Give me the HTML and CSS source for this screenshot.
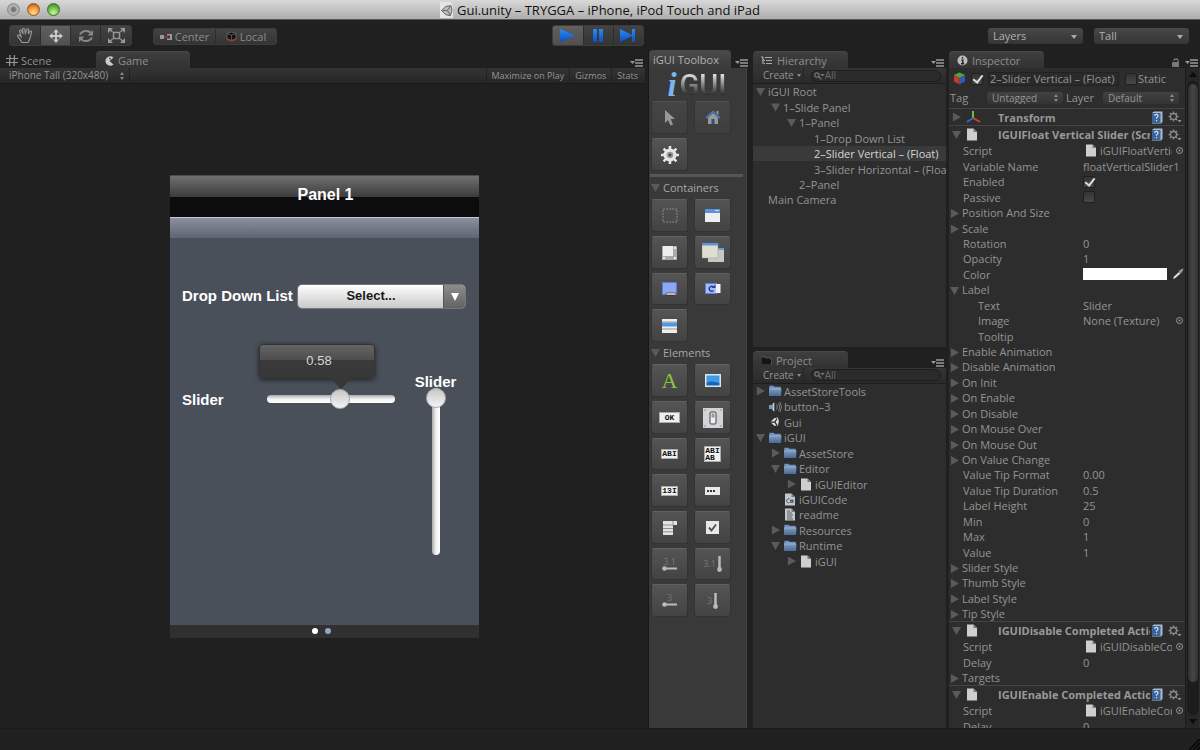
FILE: index.html
```html
<!DOCTYPE html>
<html lang="en">
<head>
<meta charset="utf-8">
<title>Gui.unity – TRYGGA – iPhone, iPod Touch and iPad</title>
<link rel="stylesheet" href="styles.css">
</head>
<body>
<svg class="defs" aria-hidden="true">
  <defs>
    <linearGradient id="blue" x1="0" y1="0" x2="0" y2="1"><stop offset="0" stop-color="#2c8cf4"/><stop offset="1" stop-color="#0b4fc4"/></linearGradient>
    <linearGradient id="fold" x1="0" y1="0" x2="0" y2="1"><stop offset="0" stop-color="#7f9cc0"/><stop offset="1" stop-color="#4d6a92"/></linearGradient>
    <symbol id="menu" viewBox="0 0 14 8"><path d="M0 2h5l-2.500 3z" fill="#999"/><path d="M5 1h8M5 4h8M5 7h8" stroke="#999" stroke-width="1.300"/></symbol>
    <symbol id="folder" viewBox="0 0 14 12"><path d="M1 1.500q0-1 1-1h3.500l1 1H12q1 0 1 1v8.500H1z" fill="#7593b8" stroke="#263345" stroke-width=".6"/><path d="M1 3.500h12.500l-.5 7.500H1z" fill="url(#fold)"/><path d="M1.500 4h11.500" stroke="#a5bbd8" stroke-width=".7"/></symbol>
    <symbol id="page" viewBox="0 0 12 13"><path d="M1 .5h6.500l3.500 3.500v8.500H1z" fill="#cfcfcf"/><path d="M7.500.5v3.500H11z" fill="#777"/></symbol>
    <symbol id="cspage" viewBox="0 0 12 13"><path d="M1 .5h6.500l3.500 3.500v8.500H1z" fill="#c4c8cc"/><path d="M7.500.5v3.500H11z" fill="#777"/><path d="M5.500 6a2 2 0 1 0 0 3.600M7 6.500v3.500M8.700 6.500v3.500M6.200 7.500h3.300M6.200 9h3.300" fill="none" stroke="#34506e" stroke-width=".9"/></symbol>
    <symbol id="textpage" viewBox="0 0 12 13"><path d="M1 .5h6.500l3.500 3.500v8.500H1z" fill="#c4c8cc"/><path d="M7.500.5v3.500H11z" fill="#777"/><path d="M3 3h3M3 5h5M3 7h6M3 9h5M3 11h6" stroke="#59616b" stroke-width="1"/></symbol>
    <symbol id="sound" viewBox="0 0 14 12"><path d="M1 4h2.500l3-3v10l-3-3H1z" fill="#7f9ab8"/><path d="M5.500 2v8" stroke="#ccd" stroke-width="1"/><path d="M8.500 3.500q1.500 2.500 0 5M10.500 2q2.500 4 0 8M12 1q3 5 0 10" fill="none" stroke="#888" stroke-width=".9"/></symbol>
    <symbol id="unity" viewBox="0 0 12 12"><path d="M.5 6 5 1.500 9.500.7l1.200 4.500L9.500 10.500 5 10.500z" fill="#ddd"/><path d="M5.800 6 8.500 1.800M5.800 6H.8M5.800 6l2.700 4.300" stroke="#222" stroke-width="1.500"/></symbol>
    <symbol id="help" viewBox="0 0 12 13"><path d="M1.500 1.500 3 .5h8.500v10.500L10 12.500H1z" fill="#a9bbcf"/><path d="M1 2h8.500v10H1z" fill="#3d639c"/><path d="M3.700 5q0-1.700 1.700-1.700T7 5q0 1-1.500 1.800v1M5.500 9v1.200" fill="none" stroke="#d5dfec" stroke-width="1.200"/></symbol>
    <symbol id="cog" viewBox="0 0 14 12"><circle cx="5.500" cy="5.500" r="3" fill="none" stroke="#8a8a8a" stroke-width="1.300"/><path d="M5.500.5v2M5.500 8.500v2M.5 5.500h2M8.500 5.500h2M2 2l1.400 1.400M7.600 7.600 9 9M2 9l1.400-1.400M7.600 3.400 9 2" stroke="#8a8a8a" stroke-width="1.500"/><path d="M9.500 9h4l-2 2.300z" fill="#999"/></symbol>
    <symbol id="target" viewBox="0 0 9 9"><circle cx="4.500" cy="4.500" r="3" fill="none" stroke="#999"/><circle cx="4.500" cy="4.500" r="1" fill="#999"/></symbol>
    <symbol id="search" viewBox="0 0 11 8"><circle cx="3" cy="3" r="2.200" fill="none" stroke="#777" stroke-width="1.200"/><path d="m4.800 4.800 2.400 2.600" stroke="#777" stroke-width="1.300"/><path d="M6.500 2h4l-2 2.500z" fill="#777"/></symbol>
  </defs>
</svg>

<header class="titlebar">
  <div class="lights"><button class="light gray" aria-label="Close"></button><button class="light amber" aria-label="Minimize"></button><button class="light green" aria-label="Zoom"></button></div>
  <h1 class="title"><svg width="13" height="16" viewBox="0 0 13 16"><path d="M0 0h10l3 3v13H0z" fill="#e4e4e4"/><path d="M1.500 8.500 6 4.300l5-.6 1 5-1.600 5L6 12.800z M7.500 8.500l2.500-4M7.500 8.500h-5M7.500 8.500l2.700 4.500" fill="#bbb" stroke="#666" stroke-width="1"/></svg>Gui.unity – TRYGGA – iPhone, iPod Touch and iPad</h1>
</header>

<nav class="toolbar">
  <div class="group tools">
    <button aria-label="Hand"><svg width="18" height="17" viewBox="0 0 18 17"><path d="M6 15.500C4 12 1.500 10 1.500 8.500q1-1.500 3.500 1L3.500 4q.2-1.800 1.800-.7L7 7 6.700 2q.8-1.600 2 0L9.300 6.500 11 2.200q1.300-1 1.800.5L12.200 7l2-2.800q1.600-.5 1.400 1-1.100 3-1.700 6.300-.7 2.500-1.900 4z" fill="none" stroke="#999" stroke-width="1.100"/></svg></button>
    <button class="on" aria-label="Move"><svg width="16" height="16" viewBox="0 0 16 16"><path d="M8 2v12M2 8h12" stroke="#c8c8c8" stroke-width="2"/><path d="M8 1 5 4.500h6zM8 15l-3-3.500h6zM1 8l3.500-3v6zM15 8l-3.500-3v6z" fill="#c8c8c8"/></svg></button>
    <button aria-label="Rotate"><svg width="16" height="14" viewBox="0 0 16 14"><path d="M2 5.500Q4 2 8 2t5 2.500M14 8.500Q12 12 8 12t-5-2.500" fill="none" stroke="#888" stroke-width="2"/><path d="M15 1v5.500H9.500zM1 13V7.500h5.500z" fill="#888"/></svg></button>
    <button aria-label="Scale"><svg width="17" height="15" viewBox="0 0 17 15"><rect x="5.500" y="4.500" width="6" height="6" fill="none" stroke="#999" stroke-width="1.500"/><path d="m1.500 1 3 3M15.500 1l-3 3M1.500 14l3-3M15.500 14l-3-3" stroke="#999" stroke-width="1.300"/><path d="M0 0h5L0 5zM17 0h-5l5 5zM0 15h5l-5-5zM17 15h-5l5-5z" fill="#999"/></svg></button>
  </div>
  <div class="group pivots">
    <button><svg width="12" height="8" viewBox="0 0 12 8"><path d="M0 2h4v4H0zM7 1h5v6H7v-1.500h3v-3H7z" fill="#999"/><path d="M4 4h4" stroke="#a33" stroke-width="1.500"/></svg>Center</button>
    <button><svg width="11" height="11" viewBox="0 0 11 11"><path d="M1 2.500 5.500 1 10 2.500v5L5.500 9.500 1 7.500z" fill="#111" stroke="#666" stroke-width=".9"/><path d="M5.500 4v5M1 2.500l4.500 1.700L10 2.500" fill="none" stroke="#666" stroke-width=".8"/><path d="M0 7q5.500 6 11 0" fill="none" stroke="#a33" stroke-width="1.200"/></svg>Local</button>
  </div>
  <div class="group play">
    <button class="on" aria-label="Play"><svg width="15" height="13" viewBox="0 0 15 13"><path d="m0 0 15 6.500L0 13z" fill="url(#blue)"/></svg></button>
    <button aria-label="Pause"><svg width="10" height="13" viewBox="0 0 10 13"><path d="M0 0h4v13H0zM6 0h4v13H6z" fill="url(#blue)"/></svg></button>
    <button aria-label="Step"><svg width="16" height="13" viewBox="0 0 16 13"><path d="m0 0 12 6V0h3v13h-3V7L0 13z" fill="url(#blue)"/></svg></button>
  </div>
  <div class="pickers">
    <span class="pick"><select aria-label="Layers"><option>Layers</option></select></span>
    <span class="pick"><select aria-label="Layout"><option>Tall</option></select></span>
  </div>
</nav>

<main class="workspace">
  <section class="view">
    <div class="tabs">
      <button class="tab quiet"><svg width="12" height="11" viewBox="0 0 12 11"><path d="M4 0 3.500 11M8.500 0 8 11M0 3.500h12M0 7.500h12" stroke="#999" stroke-width="1.200"/></svg>Scene</button>
      <button class="tab game"><svg width="10" height="10" viewBox="0 0 10 10"><path d="M8.500 1.500A4.800 4.800 0 1 0 8.500 8.500L4.500 5z" fill="#ccc"/><circle cx="5" cy="2.600" r=".8" fill="#333"/></svg>Game</button>
      <svg class="menu" width="14" height="8"><use href="#menu"/></svg>
    </div>
    <div class="strip">
      <span class="updown screen"><select aria-label="Aspect"><option>iPhone Tall (320x480)</option></select></span>
      <button class="first">Maximize on Play</button><button>Gizmos</button><button>Stats</button>
    </div>
    <div class="stage">
      <div class="phone">
        <div class="phone-title">Panel 1</div>
        <div class="phone-body">
          <div class="field"><label for="drop">Drop Down List</label><span class="drop"><select id="drop"><option>Select...</option></select></span></div>
          <div class="sliders">
            <label for="hs">Slider</label>
            <div class="hwrap"><output class="tip" for="hs">0.58</output><input id="hs" type="range" min="0" max="1" step="0.01" value="0.58"></div>
            <div class="vwrap"><label for="vs">Slider</label><input id="vs" type="range" min="0" max="1" step="0.01" value="1"></div>
          </div>
        </div>
        <div class="dots"><i></i><i class="dim"></i></div>
      </div>
    </div>
  </section>

  <section class="toolbox">
    <div class="tabs"><button class="tab">iGUI Toolbox</button><svg class="menu" width="14" height="8"><use href="#menu"/></svg></div>
    <div class="kit">
      <div class="logo"><i>i</i><b>GUI</b></div>
      <div class="pads">
        <button class="faint" aria-label="Select"><svg width="12" height="16" viewBox="0 0 12 16"><path d="M1 0v13l3-3 2.500 5.500 2.500-1L6.700 9H11z" fill="#999"/></svg></button>
        <button class="faint" aria-label="Home"><svg width="16" height="15" viewBox="0 0 16 15"><path d="M3 7.500 8 3l5 4.500V14H3z" fill="#999"/><path d="M1 8 8 1.500 15 8" fill="none" stroke="#4d72ab" stroke-width="2"/><path d="M6.500 9h3v5h-3z" fill="#2d4f86"/><path d="M11.500 1h2v4l-2-2z" fill="#999"/></svg></button>
        <button aria-label="Settings"><svg width="20" height="20" viewBox="0 0 20 20"><g stroke="#e6e6e6" stroke-width="2.600"><path d="M10 1v18M1 10h18M3.600 3.600l12.800 12.800M3.600 16.400 16.400 3.600"/></g><circle cx="10" cy="10" r="6.500" fill="#e6e6e6"/><circle cx="10" cy="10" r="3.300" fill="#999"/><circle cx="10" cy="10" r="1.500" fill="#444"/></svg></button>
      </div>
      <hr>
      <h2><i class="arr open"></i>Containers</h2>
      <div class="pads">
        <button aria-label="Container"><svg width="16" height="15" viewBox="0 0 16 15"><rect x="1" y="1" width="14" height="13" fill="none" stroke="#888" stroke-dasharray="2 1"/></svg></button>
        <button aria-label="Window"><svg width="15" height="13" viewBox="0 0 15 13"><path d="M0 0h15v13H0z" fill="#eee"/><path d="M0 0h15v4H0z" fill="#5c91dc"/><path d="M10 1.500h4" stroke="#dde" stroke-width="1"/></svg></button>
        <button aria-label="Scroll view"><svg width="15" height="14" viewBox="0 0 15 14"><path d="M0 0h15v14H0z" fill="#aaa"/><path d="M1 0h10v10H1z" fill="#eee"/><path d="M12 1h2v2h-2zM12 11h2v2h-2zM1 11h2v2H1z" fill="#eee"/></svg></button>
        <button aria-label="Slide panel"><svg width="22" height="20" viewBox="0 0 22 20"><path d="M6 5h16v14H6z" fill="#c9c9c0"/><path d="M6 5h16v2H6z" fill="#6a9be0"/><path d="M0 0h16v15H0z" fill="#ddddd4" stroke="#999" stroke-width=".5"/><path d="M0 0h16v2.500H0z" fill="#5e92da"/></svg></button>
        <button aria-label="Tab panel"><svg width="15" height="14" viewBox="0 0 15 14"><path d="M.5.500h14v12H.5z" fill="#8fa7f0" stroke="#6079d8"/><path d="M4 11h10v2H4z" fill="#fff" stroke="#333" stroke-width=".7"/></svg></button>
        <button aria-label="Switch panel"><svg width="16" height="12" viewBox="0 0 16 12"><path d="M.5.500h11v10H.5z" fill="#a9bdf5" stroke="#617cda"/><path d="M11 1h4.500v9H11z" fill="#f0f0ff"/><path d="M8.500 4A2.500 2.500 0 1 0 8.500 7.500" fill="none" stroke="#23409a" stroke-width="1.500"/><path d="M6.500 5h4V1.500z" fill="#23409a"/></svg></button>
        <button aria-label="List"><svg width="15" height="14" viewBox="0 0 15 14"><path d="M0 0h15v14H0z" fill="#eee"/><path d="M0 3.500h15v4H0z" fill="#4b9be0"/><path d="M0 3h15M0 10h15" stroke="#999"/></svg></button>
      </div>
      <h2 class="later"><i class="arr open"></i>Elements</h2>
      <div class="pads">
        <button class="letter" aria-label="Label">A</button>
        <button aria-label="Image"><svg width="16" height="13" viewBox="0 0 16 13"><path d="M0 0h16v13H0z" fill="#d8e6ee"/><path d="M1.500 1.500h13v7h-13z" fill="#3f9be8"/><path d="M1.500 8.500 6 7.500l8.500 1v3h-13z" fill="#1566b4"/></svg></button>
        <button aria-label="Button"><span class="chip">OK</span></button>
        <button aria-label="Switch"><svg width="20" height="20" viewBox="0 0 20 20"><path d="M0 0h20v20H0z" fill="#d4d4d8"/><rect x="7" y="4" width="6" height="12" rx="1" fill="#eee" stroke="#444"/><path d="M8.500 5.500h3v4h-3z" fill="#999"/><g fill="#777"><circle cx="2" cy="2" r=".7"/><circle cx="18" cy="2" r=".7"/><circle cx="2" cy="18" r=".7"/><circle cx="18" cy="18" r=".7"/></g></svg></button>
        <button aria-label="Text field"><span class="chip tight">ABI</span></button>
        <button aria-label="Text area"><span class="chip tight tall">ABI<br>AB</span></button>
        <button aria-label="Number field"><span class="chip tight">13I</span></button>
        <button aria-label="Password field"><svg width="15" height="8" viewBox="0 0 15 8"><path d="M0 0h15v8H0z" fill="#e8e8e8"/><path d="M2 3h2v2H2zM5 3h2v2H5zM8 3h2v2H8z" fill="#333"/></svg></button>
        <button aria-label="Drop down list"><svg width="14" height="14" viewBox="0 0 14 14"><path d="M0 0h14v4h-4v10H0z" fill="#e3e3e0"/><path d="M0 4h10M0 7.500h10M0 10.800h10M10 0v4" stroke="#888" stroke-width=".9"/></svg></button>
        <button aria-label="Checkbox"><svg width="13" height="13" viewBox="0 0 13 13"><path d="M0 0h13v13H0z" fill="#e8e8e8"/><path d="m3 6.500 2.500 3L10 3.500" fill="none" stroke="#555" stroke-width="2"/></svg></button>
        <button class="num" aria-label="Float slider horizontal"><span>3.1</span><svg width="16" height="5" viewBox="0 0 16 5"><path d="M2 2.500h13" stroke="#bbb" stroke-width="2"/><circle cx="2.500" cy="2.500" r="2.300" fill="#bbb"/></svg></button>
        <button class="num v" aria-label="Float slider vertical"><span>3.1</span><svg width="5" height="16" viewBox="0 0 5 16"><path d="M2.500 0v13" stroke="#bbb" stroke-width="2.500"/><circle cx="2.500" cy="13.500" r="2.400" fill="#bbb"/></svg></button>
        <button class="num" aria-label="Integer slider horizontal"><span>3</span><svg width="16" height="5" viewBox="0 0 16 5"><path d="M2 2.500h13" stroke="#bbb" stroke-width="2"/><circle cx="2.500" cy="2.500" r="2.300" fill="#bbb"/></svg></button>
        <button class="num v" aria-label="Integer slider vertical"><span>3</span><svg width="5" height="16" viewBox="0 0 5 16"><path d="M2.500 0v13" stroke="#bbb" stroke-width="2.500"/><circle cx="2.500" cy="13.500" r="2.400" fill="#bbb"/></svg></button>
      </div>
    </div>
  </section>

  <div class="stack">
    <section class="panel">
      <div class="tabs"><button class="tab wide"><svg width="12" height="9" viewBox="0 0 12 9"><path d="M0 1h2M1 4h2M3 4.500h1M3 7.500h1M4 1.500h7M5 4.500h6M5 7.500h6M2 1v7" stroke="#aaa" stroke-width="1.200"/></svg>Hierarchy</button><svg class="menu" width="14" height="8"><use href="#menu"/></svg></div>
      <div class="finder"><button>Create<i></i></button><label><svg width="11" height="8"><use href="#search"/></svg><input type="text" placeholder="All" aria-label="Search hierarchy"></label></div>
      <ul class="tree">
        <li><i class="arr open"></i>iGUI Root</li>
        <li class="d1"><i class="arr open"></i>1–Slide Panel</li>
        <li class="d2"><i class="arr open"></i>1–Panel</li>
        <li class="d3"><i class="arr"></i>1–Drop Down List</li>
        <li class="d3 sel"><i class="arr"></i>2–Slider Vertical – (Float)</li>
        <li class="d3"><i class="arr"></i>3–Slider Horizontal – (Float)</li>
        <li class="d2"><i class="arr"></i>2–Panel</li>
        <li><i class="arr"></i>Main Camera</li>
      </ul>
    </section>
    <section class="panel">
      <div class="tabs"><button class="tab wide"><svg width="11" height="9" viewBox="0 0 11 9"><path d="M0 1h4l1 1h5v2h1L10 9H0z" fill="#151515" stroke="#666" stroke-width=".7"/></svg>Project</button><svg class="menu" width="14" height="8"><use href="#menu"/></svg></div>
      <div class="finder"><button>Create<i></i></button><label><svg width="11" height="8"><use href="#search"/></svg><input type="text" placeholder="All" aria-label="Search project"></label></div>
      <ul class="tree">
        <li><i class="arr shut"></i><svg width="14" height="12"><use href="#folder"/></svg>AssetStoreTools</li>
        <li><i class="arr"></i><svg width="14" height="12"><use href="#sound"/></svg>button–3</li>
        <li><i class="arr"></i><svg width="14" height="10"><use href="#unity"/></svg>Gui</li>
        <li><i class="arr open"></i><svg width="14" height="12"><use href="#folder"/></svg>iGUI</li>
        <li class="d1"><i class="arr shut"></i><svg width="14" height="12"><use href="#folder"/></svg>AssetStore</li>
        <li class="d1"><i class="arr open"></i><svg width="14" height="12"><use href="#folder"/></svg>Editor</li>
        <li class="d2"><i class="arr shut"></i><svg width="14" height="13"><use href="#page"/></svg>iGUIEditor</li>
        <li class="d1"><i class="arr"></i><svg width="14" height="13"><use href="#cspage"/></svg>iGUICode</li>
        <li class="d1"><i class="arr"></i><svg width="14" height="13"><use href="#textpage"/></svg>readme</li>
        <li class="d1"><i class="arr shut"></i><svg width="14" height="12"><use href="#folder"/></svg>Resources</li>
        <li class="d1"><i class="arr open"></i><svg width="14" height="12"><use href="#folder"/></svg>Runtime</li>
        <li class="d2"><i class="arr shut"></i><svg width="14" height="13"><use href="#page"/></svg>iGUI</li>
      </ul>
    </section>
  </div>

  <section class="panel inspector">
    <div class="tabs"><button class="tab wide"><svg width="11" height="11" viewBox="0 0 11 11"><circle cx="5.500" cy="5.500" r="5" fill="#bbb"/><path d="M5.500 2v1.600M4.500 5h1.300v3.500M4 8.700h3.200" fill="none" stroke="#222" stroke-width="1.400"/></svg>Inspector</button>
      <span class="menu"><svg width="8" height="9" viewBox="0 0 8 9"><path d="M0 4h7v5H0z" fill="#777"/><path d="M2 3V2q2-2 4 0v2" fill="none" stroke="#777" stroke-width="1.200"/></svg><svg width="14" height="8"><use href="#menu"/></svg></span></div>
    <div class="scroller">
      <div class="props">
        <div class="object">
          <svg width="13" height="13" viewBox="0 0 13 13"><path d="m6.500.5 5.500 2.500-5.500 3L1 3z" fill="#4fa83c"/><path d="M1 3l5.500 3v6.500L1 9.500z" fill="#c8382e"/><path d="m12 3-5.500 3v6.500l5.500-3z" fill="#3558b8"/></svg>
          <input type="checkbox" class="check" checked aria-label="Active">
          <input class="name" type="text" value="2–Slider Vertical – (Float)" aria-label="Name">
          <label class="static"><input type="checkbox" class="check">Static</label>
        </div>
        <div class="taglayer"><label for="tag">Tag</label><span class="updown boxed"><select id="tag"><option>Untagged</option></select></span><label for="layer">Layer</label><span class="updown boxed"><select id="layer"><option>Default</option></select></span></div>
        <h3 class="comp"><i class="arr shut"></i><svg width="16" height="12" viewBox="0 0 16 12"><path d="M7 7V0" stroke="#6cc22c" stroke-width="2"/><path d="m7 7 7 4" stroke="#d8432c" stroke-width="2"/><path d="m7 7-6 4" stroke="#3a5fe0" stroke-width="2"/></svg><span>Transform</span><svg width="12" height="13"><use href="#help"/></svg><svg width="14" height="12"><use href="#cog"/></svg></h3>
        <h3 class="comp"><i class="arr open"></i><svg width="12" height="13"><use href="#page"/></svg><span class="doc">IGUIFloat Vertical Slider (Script)</span><svg width="12" height="13"><use href="#help"/></svg><svg width="14" height="12"><use href="#cog"/></svg></h3>
        <div class="rows">
          <div class="row"><span>Script</span><div class="ref"><svg width="12" height="13"><use href="#page"/></svg><em>iGUIFloatVerticalSlider</em><svg width="9" height="9"><use href="#target"/></svg></div></div>
          <div class="row"><label for="f1">Variable Name</label><input id="f1" type="text" value="floatVerticalSlider1"></div>
          <div class="row"><label for="f2">Enabled</label><input id="f2" type="checkbox" class="check" checked></div>
          <div class="row"><label for="f3">Passive</label><input id="f3" type="checkbox" class="check"></div>
          <div class="row"><span><i class="arr shut"></i>Position And Size</span></div>
          <div class="row"><span><i class="arr shut"></i>Scale</span></div>
          <div class="row"><label for="f4">Rotation</label><input id="f4" type="text" value="0"></div>
          <div class="row"><label for="f5">Opacity</label><input id="f5" type="text" value="1"></div>
          <div class="row"><span>Color</span><div class="color"><button aria-label="Color"></button><svg width="12" height="12" viewBox="0 0 12 12"><path d="m1 11 1-2.500L7 4l1.500 1.500L3.500 10z" fill="#ddd"/><path d="m6.500 3 2.500 2.500L11.500 1.500 10.500.5z" fill="#999"/></svg></div></div>
          <div class="row"><span><i class="arr open"></i>Label</span></div>
          <div class="row sub"><label for="f6">Text</label><input id="f6" type="text" value="Slider"></div>
          <div class="row sub"><span>Image</span><div class="ref"><em>None (Texture)</em><svg width="9" height="9"><use href="#target"/></svg></div></div>
          <div class="row sub"><label for="f7">Tooltip</label><input id="f7" type="text"></div>
          <div class="row"><span><i class="arr shut"></i>Enable Animation</span></div>
          <div class="row"><span><i class="arr shut"></i>Disable Animation</span></div>
          <div class="row"><span><i class="arr shut"></i>On Init</span></div>
          <div class="row"><span><i class="arr shut"></i>On Enable</span></div>
          <div class="row"><span><i class="arr shut"></i>On Disable</span></div>
          <div class="row"><span><i class="arr shut"></i>On Mouse Over</span></div>
          <div class="row"><span><i class="arr shut"></i>On Mouse Out</span></div>
          <div class="row"><span><i class="arr shut"></i>On Value Change</span></div>
          <div class="row"><label for="f8">Value Tip Format</label><input id="f8" type="text" value="0.00"></div>
          <div class="row"><label for="f9">Value Tip Duration</label><input id="f9" type="text" value="0.5"></div>
          <div class="row"><label for="f10">Label Height</label><input id="f10" type="text" value="25"></div>
          <div class="row"><label for="f11">Min</label><input id="f11" type="text" value="0"></div>
          <div class="row"><label for="f12">Max</label><input id="f12" type="text" value="1"></div>
          <div class="row"><label for="f13">Value</label><input id="f13" type="text" value="1"></div>
          <div class="row"><span><i class="arr shut"></i>Slider Style</span></div>
          <div class="row"><span><i class="arr shut"></i>Thumb Style</span></div>
          <div class="row"><span><i class="arr shut"></i>Label Style</span></div>
          <div class="row"><span><i class="arr shut"></i>Tip Style</span></div>
        </div>
        <h3 class="comp"><i class="arr open"></i><svg width="12" height="13"><use href="#page"/></svg><span class="doc">IGUIDisable Completed Action (Script)</span><svg width="12" height="13"><use href="#help"/></svg><svg width="14" height="12"><use href="#cog"/></svg></h3>
        <div class="rows">
          <div class="row"><span>Script</span><div class="ref"><svg width="12" height="13"><use href="#page"/></svg><em>iGUIDisableCompletedAction</em><svg width="9" height="9"><use href="#target"/></svg></div></div>
          <div class="row"><label for="f14">Delay</label><input id="f14" type="text" value="0"></div>
          <div class="row"><span><i class="arr shut"></i>Targets</span></div>
        </div>
        <h3 class="comp"><i class="arr open"></i><svg width="12" height="13"><use href="#page"/></svg><span class="doc">IGUIEnable Completed Action (Script)</span><svg width="12" height="13"><use href="#help"/></svg><svg width="14" height="12"><use href="#cog"/></svg></h3>
        <div class="rows">
          <div class="row"><span>Script</span><div class="ref"><svg width="12" height="13"><use href="#page"/></svg><em>iGUIEnableCompletedAction</em><svg width="9" height="9"><use href="#target"/></svg></div></div>
          <div class="row"><label for="f15">Delay</label><input id="f15" type="text" value="0"></div>
        </div>
      </div>
      <div class="bar"><i class="up"></i><div class="track"><b></b></div><i class="down"></i></div>
    </div>
  </section>
</main>
<footer class="status"><svg width="11" height="11" viewBox="0 0 11 11"><path d="M0 11 11 0M4 11l7-7M8 11l3-3" stroke="#050505" stroke-width="1.500"/></svg></footer>
</body>
</html>
```
FILE: styles.css
```css
* { box-sizing: border-box; }
body {
  margin: 0; height: 100vh; overflow: hidden;
  display: flex; flex-direction: column;
  background: #202020; color: #949494;
  font: 11px/15px "Open Sans", "Noto Sans", sans-serif;
}
button, input, select {
  font: inherit; color: inherit; background: none; border: 0; padding: 0; margin: 0;
  border-radius: 0; appearance: none; min-width: 0; outline: none;
}
svg { display: block; flex: none; }
.defs { position: absolute; width: 0; height: 0; }
h1, h2, h3, ul { margin: 0; padding: 0; font-size: 11px; font-weight: 400; list-style: none; }

.titlebar {
  flex: none; height: 20px; display: grid; grid-template-columns: 1fr auto 1fr; align-items: center;
  background: linear-gradient(#d8d8d8, #adadad); border-bottom: 1px solid #555;
}
.lights { display: flex; gap: 7px; padding-left: 7px; }
.light { width: 13px; height: 13px; border-radius: 50%; border: 1px solid #777; }
.gray { background: radial-gradient(#777 25%, #b4b4b4 45%, #9a9a9a); border-color: #8c8c8c; }
.amber { background: radial-gradient(circle at 50% 80%, #ffe08a, #f29b3c 50%, #b8391c); border-color: #a0522d; }
.green { background: radial-gradient(circle at 50% 80%, #d4f7a0, #6fc24a 50%, #2f7a22); border-color: #3c7030; }
.title { display: flex; align-items: center; gap: 4px; color: #111; font: 13px/18px "Open Sans", sans-serif; }

.toolbar {
  flex: none; height: 30px; padding: 5px 11px 4px 6px;
  display: grid; grid-template-columns: 1fr auto 1fr; grid-template-rows: auto; align-items: center;
}
.group { display: flex; border-radius: 3px; overflow: hidden; background: linear-gradient(#434343, #343434); border: 1px solid #3c3c3c; }
.group button { display: flex; align-items: center; justify-content: center; gap: 3px; color: #8c8c8c; }
.group button + button { border-left: 1px solid #2c2c2c; }
.group .on { background: linear-gradient(#606060, #505050); }
.tools, .pivots { grid-column: 1; grid-row: 1; justify-self: start; }
.tools { margin-left: 3px; }
.tools button { width: 30px; height: 19px; }
.tools button:last-child { width: 31px; }
.pivots { margin-left: 147px; margin-top: 2px; }
.pivots button { width: 61px; height: 15px; }
.play { grid-column: 2; grid-row: 1; }
.play button { width: 30px; height: 19px; }
.pickers { grid-column: 3; grid-row: 1; justify-self: end; display: flex; gap: 11px; }
.pick { width: 95px; position: relative; border-radius: 3px; background: linear-gradient(#484848, #353535); }
.pick select { width: 100%; height: 16px; padding-left: 5px; color: #b0b0b0; display: block; }
.pick::after { content: ""; position: absolute; right: 6px; top: 7px; border: 3px solid transparent; border-top: 4px solid #aaa; border-bottom: 0; pointer-events: none; }

.workspace { flex: 1; min-height: 0; display: grid; grid-template-columns: minmax(0, 1fr) 102px 193px 251px; gap: 3px; }
.workspace > *, .panel { min-height: 0; min-width: 0; display: flex; flex-direction: column; overflow: hidden; }
.tabs { flex: none; height: 18px; display: flex; align-items: flex-end; }
.tab {
  height: 17px; padding: 1px 12px 0 6px; display: flex; align-items: center; gap: 3px; white-space: nowrap;
  color: #8e8e8e; background: linear-gradient(#3f3f3f, #323232); border-top: 1px solid #484848; border-radius: 4px 4px 0 0;
}
.quiet { background: none; border-color: transparent; width: 96px; }
.game { width: 94px; padding-left: 9px; }
.wide { width: 95px; padding-left: 8px; gap: 4px; padding-right: 0; }
.menu { margin: 0 1px 1px auto; display: flex; gap: 5px; align-items: flex-end; }

.strip {
  flex: none; height: 16px; display: flex; align-items: center; font-size: 10px;
  background: linear-gradient(#343434, #262626); border-bottom: 1px solid #191919; padding: 0 2px 0 4px;
}
.strip button { padding: 0 5px; height: 15px; border-left: 1px solid #222; font-size: 9px; }
.strip .first { margin-left: auto; }
.updown { position: relative; display: block; }
.updown select { width: 100%; display: block; font-size: 10px; }
.updown::before, .updown::after { content: ""; position: absolute; right: 5px; top: 50%; border: 2px solid transparent; pointer-events: none; }
.updown::before { border-bottom: 3px solid #8a8a8a; border-top: 0; margin-top: -4px; }
.updown::after { border-top: 3px solid #8a8a8a; border-bottom: 0; margin-top: 1px; }
.screen { width: 126px; border-right: 1px solid #222; }
.screen select { height: 15px; padding-left: 5px; }

.stage { flex: 1; min-height: 0; display: flex; align-items: center; justify-content: center; background: #202020; padding-left: 4px; }
.phone { width: 309px; color: #fff; font: 700 15px/18px "Liberation Sans", Arial, sans-serif; background: #4a505a; }
.phone-title { height: 42px; line-height: 38px; text-align: center; font-size: 16px; padding-left: 2px; background: linear-gradient(#707070, #3c3c3c 50%, #0c0c0e 50%); border-top: 1px solid #4c4c4c; }
.phone-body { height: 408px; padding: 66px 12px 0; border-top: 1px solid #c4c8d0; background: linear-gradient(#8a909e, #5d6472) 0 0 / 100% 20px no-repeat; }
.field { display: flex; align-items: center; justify-content: space-between; padding-right: 1px; }
.drop { position: relative; width: 169px; border-radius: 5px; overflow: hidden; background: linear-gradient(#fff, #c8c8c8); border: 1px solid #777; }
.drop select { display: block; width: 100%; height: 23px; padding-right: 21px; color: #1a1a1a; font-size: 13px; text-align: center; text-align-last: center; }
.drop::before { content: ""; position: absolute; right: 0; top: 0; bottom: 0; width: 21px; background: linear-gradient(#8c8c8c, #636363); border-left: 1px solid #555; pointer-events: none; }
.drop::after { content: ""; position: absolute; right: 6px; top: 8px; border: 4px solid transparent; border-top: 8px solid #fff; border-bottom: 0; pointer-events: none; }
.sliders { display: grid; grid-template-columns: 85px 128px 1fr; padding-top: 64px; }
.sliders > label { padding-top: 18px; }
.hwrap { position: relative; padding-top: 16px; }
.tip {
  position: absolute; left: -8px; top: -29px; width: 116px; height: 35px; border-radius: 4px; text-align: center;
  font: 13px/31px "Liberation Sans", sans-serif; color: #d6d6d6; padding-left: 4px;
  background: linear-gradient(#646464, #4e4e4e 45%, #3a3a3a 46%, #373737); border: 1px solid #333; box-shadow: 0 1px 5px #0009;
}
.tip::after { content: ""; position: absolute; left: 70px; top: 33px; border: 11px solid transparent; border-top: 11px solid #373737; border-bottom: 0; }
input[type=range] { display: block; }
#hs { width: 128px; height: 20px; position: relative; }
#vs { writing-mode: vertical-lr; direction: rtl; width: 20px; height: 167px; margin: 0 auto; }
#hs::-webkit-slider-runnable-track { height: 8px; border-radius: 4px; background: linear-gradient(#aaa, #f2f2f2 4px, #fff); }
#vs::-webkit-slider-runnable-track { width: 8px; border-radius: 4px; background: linear-gradient(90deg, #aaa, #f2f2f2 4px, #fff); }
input[type=range]::-webkit-slider-thumb {
  appearance: none; width: 20px; height: 20px; border-radius: 50%; border: 1px solid #aaa;
  background: linear-gradient(#c6c6c6, #f4f4f4);
}
#hs::-webkit-slider-thumb { margin-top: -6px; }
#vs::-webkit-slider-thumb { margin-left: -6px; }
.vwrap { display: flex; flex-direction: column; padding-left: 9px; }
.vwrap label { text-align: center; height: 15px; line-height: 17px; }
.dots { height: 13px; padding-right: 7px; display: flex; gap: 7px; align-items: center; justify-content: center; background: #303030; }
.dots i { width: 6px; height: 6px; border-radius: 50%; background: #fff; }
.dots .dim { background: #93a7c4; }

.toolbox { border-left: 1px solid #171717; }
.toolbox .tab { background: linear-gradient(#4a4a4a, #3a3a3a); color: #b0b0b0; height: 18px; padding: 0 12px 0 4px; }
.kit { flex: 1; background: #393939; padding: 0 3px 0 2px; border-right: 1px solid #444; margin-right: 3px; }
.logo { height: 33px; display: flex; justify-content: center; align-items: center; gap: 3px; }
.logo i { font: italic 700 33px/28px "Liberation Serif", serif; color: #78b6ee; }
.logo b { font: 500 29px/28px Roboto, sans-serif; color: transparent; background: linear-gradient(#d8d8d8 15%, #2c2c2c 85%); background-clip: text; }
.pads { display: grid; grid-template-columns: 37px 37px; grid-auto-rows: 33px 33px 32px; gap: 4px 6px; }
.pads button {
  display: flex; align-items: center; justify-content: center; border-radius: 3px;
  background: linear-gradient(#545454, #434343); border: 1px solid #333; border-top-color: #606060;
}
.pads .faint { background: linear-gradient(#454545, #3e3e3e); border-top-color: #505050; }
.kit hr { border: 0; height: 3px; background: #565656; margin: 3px 0 2px -1px; }
.kit h2 { display: flex; align-items: center; gap: 3px; height: 20px; color: #a8a8a8; padding-bottom: 3px; }
.kit .later { margin-top: 2px; }
.pads .letter { font: 22px/22px "Liberation Serif", serif; color: #8cc63c; }
.chip { background: #f0f0f0; color: #111; font: 700 8px/9px "Liberation Mono", monospace; padding: 0 5px; border: 1px solid #aaa; }
.chip.tight { padding: 0; line-height: 8px; }
.chip.tall { line-height: 7px; text-align: left; }
.pads .num { flex-direction: column; gap: 0; color: #777; font-size: 9px; line-height: 8px; }
.pads .v { flex-direction: row; gap: 1px; }

.arr { width: 9px; height: 9px; flex: none; display: inline-block; }
.open, .shut { background: #5a5a5a; }
.open { clip-path: polygon(0 10%, 100% 10%, 50% 100%); }
.shut { clip-path: polygon(10% 0, 100% 50%, 10% 100%); }

.stack { display: grid; grid-template-rows: 297fr 379fr; gap: 3px; }
.stack .panel, .inspector { background: linear-gradient(#202020 18px, #2d2d2d 18px); }
.finder { flex: none; height: 16px; display: flex; align-items: center; gap: 7px; background: linear-gradient(#353535, #292929); border-bottom: 1px solid #1e1e1e; padding: 0 5px 0 10px; font-size: 10px; }
.finder button { display: flex; align-items: center; gap: 3px; padding-right: 2px; border-right: 1px solid #242424; }
.finder button i { border: 2px solid transparent; border-top: 3px solid #888; border-bottom: 0; }
.finder label { flex: 1; display: flex; align-items: center; height: 12px; border-radius: 6px; background: #2b2b2b; border: 1px solid #1e1e1e; padding-left: 2px; }
.finder input { width: 100%; height: 10px; }
.finder input::placeholder { color: #6c6c6c; opacity: 1; }
.tree li { height: 15px; padding-left: 3px; display: flex; align-items: center; gap: 3px; white-space: nowrap; }
.tree li:nth-child(7n+2), .tree li:nth-child(7n+4), .tree li:nth-child(7n+6) { height: 16px; }
.tree .d1 { padding-left: 18px; }
.tree .d2 { padding-left: 34px; }
.tree .d3 { padding-left: 49px; }
.tree .sel { background: #3a3a3a; color: #d6d6d6; }
.tree svg { margin-right: -1px; }

.scroller { flex: 1; min-height: 0; display: flex; }
.props { flex: 1; min-width: 0; overflow: hidden; }
.object { display: flex; align-items: center; height: 21px; gap: 5px; padding-left: 4px; }
.check { width: 12px; height: 12px; border-radius: 2px; background: linear-gradient(#333, #484848); border: 1px solid #202020; position: relative; flex: none; }
.check:checked::after { content: ""; position: absolute; left: 3px; top: -1px; width: 4px; height: 8px; border: solid #ddd; border-width: 0 2px 2px 0; transform: rotate(38deg); }
.name { width: 131px; height: 14px; background: #2a2a2a; border: 1px solid #222; padding: 0 1px; }
.static { display: flex; align-items: center; gap: 1px; padding-left: 1px; }
.taglayer { display: grid; grid-template-columns: 34px 76px 34px 76px; gap: 3px; padding: 0 0 2px 1px; height: 19px; align-items: center; }
.boxed { border-radius: 3px; background: linear-gradient(#424242, #343434); }
.boxed select { height: 12px; line-height: 12px; padding-left: 5px; }
.comp { display: flex; align-items: center; height: 18px; border-top: 1px solid #434343; padding: 0 3px; gap: 5px; font-weight: 700; color: #999; }
.taglayer + .comp { height: 17px; }
.comp span { flex: 1; min-width: 0; overflow: hidden; white-space: nowrap; margin: 0 -4px 0 11px; }
.comp .doc { margin-left: 15px; }
.row { height: 15px; display: grid; grid-template-columns: 120px 1fr; align-items: center; padding: 0 1px 0 14px; white-space: nowrap; }
.row:nth-child(7n+2), .row:nth-child(7n+4), .row:nth-child(7n+6) { height: 16px; }
.row .arr { margin: 0 3px -1px -13px; }
.sub { grid-template-columns: 105px 1fr; padding-left: 29px; }
.row input[type=text] { width: 100%; height: 14px; }
.ref { display: flex; align-items: center; gap: 3px; min-width: 0; }
.ref svg:first-child { margin-left: 2px; }
.ref em { flex: 1; overflow: hidden; font-style: normal; }
.color { display: flex; align-items: center; gap: 5px; }
.color button { flex: 1; height: 12px; background: #fff; }
.bar { width: 14px; flex: none; display: flex; flex-direction: column; align-items: center; background: #262626; border-left: 1px solid #1c1c1c; margin-right: 1px; }
.bar i { border: 4px solid transparent; margin: 4px 0; }
.bar .up { border-bottom: 5px solid #0b0b0b; border-top: 0; }
.bar .down { border-top: 5px solid #0b0b0b; border-bottom: 0; }
.track { flex: 1; width: 12px; background: #1c1c1c; border-radius: 6px; padding-top: 2px; }
.track b { display: block; height: 95%; border-radius: 6px; background: linear-gradient(90deg, #303030, #464646 50%, #333); border: 1px solid #1a1a1a; }

.status { flex: none; height: 22px; display: flex; justify-content: flex-end; align-items: flex-end; border-top: 1px solid #1a1a1a; }
```
